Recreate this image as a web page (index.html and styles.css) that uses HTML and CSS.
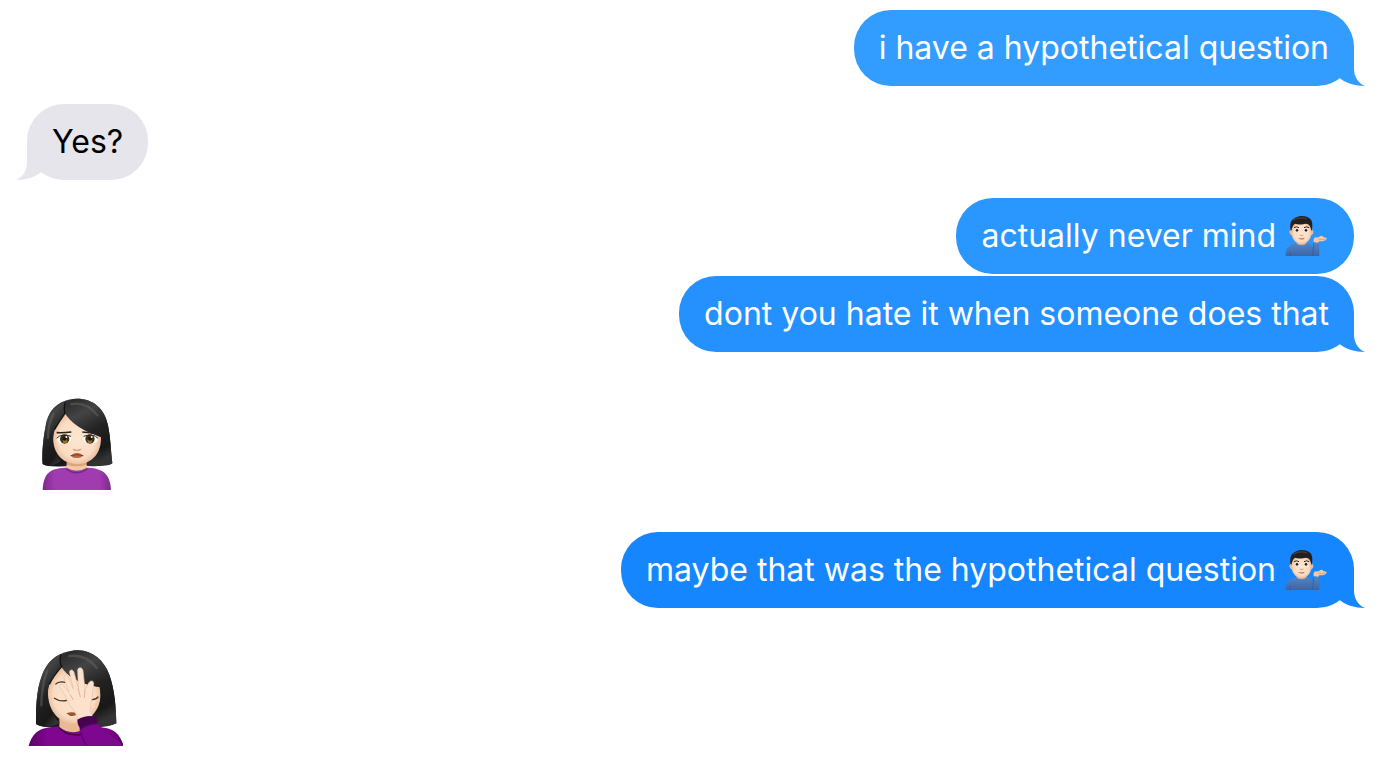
FILE: index.html
```html
<!DOCTYPE html>
<html lang="en">
<head>
    <meta charset="UTF-8">
    <meta name="viewport" content="width=device-width, initial-scale=1.0">
    <title>Messages</title>
    <link rel="stylesheet" href="styles.css">
</head>
<body>
    <!-- shared shapes -->
    <svg class="defs" width="0" height="0" aria-hidden="true">
        <defs>
            <linearGradient id="hair" x1="0.2" y1="0" x2="0.6" y2="1">
                <stop offset="0" stop-color="#2c2b2b"/>
                <stop offset="0.25" stop-color="#454444"/>
                <stop offset="0.55" stop-color="#232222"/>
                <stop offset="0.85" stop-color="#191818"/>
                <stop offset="1" stop-color="#333"/>
            </linearGradient>
            <radialGradient id="skin" cx="0.5" cy="0.5" r="0.6">
                <stop offset="0" stop-color="#fde6d2"/>
                <stop offset="0.65" stop-color="#fadcc3"/>
                <stop offset="1" stop-color="#dfa77f"/>
            </radialGradient>
            <linearGradient id="purple" x1="0" y1="0" x2="1" y2="0">
                <stop offset="0" stop-color="#7d2b8c"/>
                <stop offset="0.18" stop-color="#a03cb0"/>
                <stop offset="0.82" stop-color="#a03cb0"/>
                <stop offset="1" stop-color="#7d2b8c"/>
            </linearGradient>
            <linearGradient id="violet" x1="0" y1="0" x2="1" y2="0">
                <stop offset="0" stop-color="#5b006b"/>
                <stop offset="0.2" stop-color="#80058f"/>
                <stop offset="0.8" stop-color="#80058f"/>
                <stop offset="1" stop-color="#5b006b"/>
            </linearGradient>
            <linearGradient id="shirt" x1="0" y1="0" x2="0" y2="1">
                <stop offset="0" stop-color="#5187cb"/>
                <stop offset="1" stop-color="#3c65a6"/>
            </linearGradient>
        </defs>
        <symbol id="tail" viewBox="0 0 40 40">
            <path d="M28 0V22C28 31 32 37 39 40C29 40 20 37 15 33L4 26V0Z"/>
        </symbol>
        <symbol id="tipping-hand" viewBox="46 27 132 132">
            <path d="M48 153C48 132 54 122 72 118L86 112H108L121 117C130 120 132 130 132 153Z" fill="url(#shirt)"/>
            <path d="M81 104H110V116Q96 126 81 116Z" fill="#dfa984"/>
            <path d="M62 153V140" stroke="#35598f" stroke-width="2"/>
            <path d="M64 75C57 74 58 88 66 91H125C133 88 133 74 126 75Z" fill="#edbc95"/>
            <path d="M66 66C66 48 125 48 125 66V86C125 102 111 117 96 117C80 117 66 102 66 86Z" fill="url(#skin)"/>
            <path d="M64 79C59 60 62 44 77 38C90 30 110 32 118 39C129 45 130 60 126 79L122 66C119 59 115 56 108 56C99 59 84 59 76 56C69 60 67 70 64 79Z" fill="#252020"/>
            <path d="M70 46Q91 34 112 42" fill="none" stroke="#454040" stroke-width="4"/>
            <path d="M73 68Q80 63 88 68M103 68Q111 63 118 68" fill="none" stroke="#31231c" stroke-width="3"/>
            <ellipse cx="82" cy="76" rx="6" ry="5" fill="#fff"/>
            <ellipse cx="109" cy="76" rx="6" ry="5" fill="#fff"/>
            <circle cx="82" cy="76" r="4" fill="#291b16"/>
            <circle cx="109" cy="76" r="4" fill="#291b16"/>
            <path d="M91 90Q96 94 101 90" fill="none" stroke="#d79c79" stroke-width="3"/>
            <path d="M85 99Q96 102 106 98Q98 109 85 99Z" fill="#b95e49"/>
            <path d="M132 112Q130 99 138 97C147 99 150 92 156 92Q162 93 160 96Q171 96 171 101C168 108 158 109 148 109V115Z" fill="#f3c8a6"/>
            <path d="M145 102Q157 106 168 102" fill="none" stroke="#ce946f" stroke-width="2"/>
            <path d="M131 111Q140 115 148 112L149 153H127Z" fill="url(#shirt)"/>
            <path d="M129 153L132 115" stroke="#35598f" stroke-width="2"/>
        </symbol>
    </svg>

    <main>
        <ol class="messages">
            <li class="message sent tone-1">
                <p class="bubble">i have a hypothetical question</p>
                <svg class="tail" aria-hidden="true"><use href="#tail"/></svg>
            </li>
            <li class="message received">
                <p class="bubble">Yes?</p>
                <svg class="tail" aria-hidden="true"><use href="#tail"/></svg>
            </li>
            <li class="message sent tone-2">
                <p class="bubble">actually never mind <svg class="emoji" role="img" aria-label="man tipping hand"><use href="#tipping-hand"/></svg></p>
            </li>
            <li class="message sent tone-3 grouped">
                <p class="bubble">dont you hate it when someone does that</p>
                <svg class="tail" aria-hidden="true"><use href="#tail"/></svg>
            </li>
            <li class="message received sticker">
                <svg class="big-emoji" viewBox="-9 12 288 288" role="img" aria-label="woman pouting">
                    <path d="M38 222C35 190 40 142 47 108C54 62 84 28 138 26C190 25 224 56 234 106C242 144 242 182 247 220C232 231 192 229 141 227C92 229 54 233 38 222Z" fill="url(#hair)"/>
                    <path d="M38 300C40 250 60 235 104 233H176C220 236 240 252 243 300Z" fill="url(#purple)"/>
                    <path d="M106 233Q140 258 174 233L170 241Q140 260 110 241Z" fill="#75278a"/>
                    <path d="M110 207H170V233Q140 251 110 233Z" fill="#dca47b"/>
                    <path d="M110 224Q140 234 170 224V233Q140 249 110 233Z" fill="#f1c8a5"/>
                    <path d="M104 67C90 91 70 112 69 142C68 184 94 222 141 223C190 222 214 186 213 142C185 132 137 111 104 67Z" fill="url(#skin)"/>
                    <path d="M103 67C120 98 160 126 213 140C218 166 213 190 200 213C214 228 238 228 247 220C242 182 242 144 234 106C224 56 190 25 138 26C118 28 102 44 103 67Z" fill="url(#hair)"/>
                    <path d="M104 36C102 52 106 62 105 70C90 90 74 110 70 138C67 168 76 196 92 213C74 228 50 230 38 222C35 190 40 142 47 108C53 72 74 42 104 36Z" fill="url(#hair)"/>
                    <path d="M107 37Q100 52 105 70Q88 94 74 118" fill="none" stroke="#111" stroke-width="4"/>
                    <path d="M124 42Q170 34 202 76M70 72Q54 104 54 144" fill="none" stroke="#666" stroke-width="7" stroke-linecap="round" opacity="0.5"/>
                    <ellipse cx="102" cy="147" rx="22" ry="14" fill="#fff"/>
                    <ellipse cx="182" cy="147" rx="22" ry="14" fill="#fff"/>
                    <circle cx="104" cy="147" r="14" fill="#3b3118"/>
                    <circle cx="180" cy="147" r="14" fill="#3b3118"/>
                    <circle cx="105" cy="153" r="7" fill="#9c7130"/>
                    <circle cx="179" cy="153" r="7" fill="#9c7130"/>
                    <circle cx="104" cy="146" r="6" fill="#17140e"/>
                    <circle cx="180" cy="146" r="6" fill="#17140e"/>
                    <circle cx="109" cy="141" r="3" fill="#fff"/>
                    <circle cx="185" cy="141" r="3" fill="#fff"/>
                    <path d="M80 145Q94 129 123 139M161 139Q190 129 204 145" fill="none" stroke="#30251e" stroke-width="3"/>
                    <path d="M80 128Q103 129 124 126M157 126Q180 127 203 132" fill="none" stroke="#29231f" stroke-width="5"/>
                    <path d="M129 178Q141 185 153 178" fill="none" stroke="#dea784" stroke-width="5"/>
                    <path d="M122 197Q132 187 141 189Q151 187 160 197Q149 206 140 203Q131 206 122 197Z" fill="#bd6644"/>
                    <path d="M122 197Q141 191 160 197" fill="none" stroke="#7f3e29" stroke-width="3"/>
                </svg>
            </li>
            <li class="message sent tone-4">
                <p class="bubble">maybe that was the hypothetical question <svg class="emoji" role="img" aria-label="man tipping hand"><use href="#tipping-hand"/></svg></p>
                <svg class="tail" aria-hidden="true"><use href="#tail"/></svg>
            </li>
            <li class="message received sticker">
                <svg class="big-emoji" viewBox="21 30 288 288" role="img" aria-label="woman facepalming">
                    <path d="M48 252C48 210 48 152 66 106C84 58 124 31 174 31C220 32 252 62 268 104C284 148 288 202 289 250C261 265 219 263 168 258C121 261 78 269 48 252Z" fill="url(#hair)"/>
                    <path d="M26 318C35 285 53 265 91 262L124 258H209L253 263C288 268 303 290 311 318Z" fill="url(#violet)"/>
                    <path d="M118 236H195V265Q157 290 118 262Z" fill="#eab891"/>
                    <path d="M117 262Q140 291 187 283" fill="none" stroke="#39063f" stroke-width="4"/>
                    <path d="M123 78C100 105 84 127 84 159C83 204 112 248 157 252C206 249 241 212 242 164L239 141C195 133 145 118 123 78Z" fill="url(#skin)"/>
                    <path d="M122 74C140 112 188 134 239 141C247 180 236 218 214 240C236 258 266 262 289 250C288 202 284 148 268 104C252 62 220 32 174 31C140 32 116 48 122 74Z" fill="url(#hair)"/>
                    <path d="M121 43C118 60 126 70 124 80C102 105 86 126 83 155C82 192 98 230 120 249C96 262 66 264 48 252C48 210 48 152 66 106C78 74 98 52 121 43Z" fill="url(#hair)"/>
                    <path d="M123 43Q117 62 125 80Q101 107 88 133" fill="none" stroke="#111" stroke-width="4"/>
                    <path d="M148 48Q198 42 230 84M82 92Q64 140 64 196" fill="none" stroke="#666" stroke-width="7" stroke-linecap="round" opacity="0.5"/>
                    <path d="M106 133Q116 122 137 127" fill="none" stroke="#3d332b" stroke-width="4"/>
                    <path d="M102 174Q119 186 141 181M214 179Q228 180 235 170" fill="none" stroke="#47372d" stroke-width="4"/>
                    <path d="M139 220Q155 213 172 220Q167 230 151 228Z" fill="#9c5436"/>
                    <path d="M174 239C168 214 151 201 143 184C137 169 126 151 120 142C116 135 124 130 131 137L147 158L132 114C130 105 140 102 144 110L160 147L149 99C147 89 158 86 162 97L175 143L173 91C173 81 187 80 189 92L195 149L206 129C211 120 222 121 221 132C217 151 219 170 213 188C208 203 212 217 218 232Z" fill="#fce2cd" stroke="#e9bf9e" stroke-width="2"/>
                    <path d="M150 163L160 180M174 144L181 171M195 149L193 174" fill="none" stroke="#e5b18d" stroke-width="3"/>
                    <path d="M179 263L230 246C249 275 284 288 310 318H180C190 302 178 282 179 263Z" fill="#7e078f"/>
                    <path d="M172 239Q196 225 222 229Q235 235 232 252Q203 251 184 268Q172 258 172 239Z" fill="#46034f"/>
                    <path d="M180 269Q206 250 232 252" fill="none" stroke="#5a0869" stroke-width="4"/>
                    <path d="M201 318Q185 294 183 276" fill="none" stroke="#57066a" stroke-width="4"/>
                </svg>
            </li>
        </ol>
    </main>
</body>
</html>
```
FILE: styles.css
```css
body {
    margin: 0;
    background-color: #fff;
    font-family: Inter, "Liberation Sans", sans-serif;
    font-size: 32px;
    line-height: 44px;
}
.defs {
    position: absolute;
}
.messages {
    display: flex;
    flex-direction: column;
    gap: 18px;
    list-style: none;
    margin: 0;
    padding: 10px 39px 10px 27px;
}
.message {
    position: relative;
    max-width: 80%;
}
.sent {
    align-self: flex-end;
    color: #fff;
}
.received {
    align-self: flex-start;
    color: #000;
}
.grouped {
    margin-top: -16px;
}
.bubble {
    margin: 0;
    padding: 16px 25px;
    border-radius: 37px;
}

/* bubbles get a deeper blue further down the thread */
.tone-1 { --bubble: #329dff; }
.tone-2 { --bubble: #2a96ff; }
.tone-3 { --bubble: #2491ff; }
.tone-4 { --bubble: #1686ff; }
.received { --bubble: #e5e5eb; }
.bubble {
    background-color: var(--bubble);
}

.tail {
    position: absolute;
    right: -12px;
    bottom: 0;
    width: 40px;
    height: 40px;
    fill: var(--bubble);
}
.received .tail {
    right: auto;
    left: -12px;
    transform: scaleX(-1);
}
.emoji {
    width: 44px;
    height: 44px;
    vertical-align: top;
}
.sticker {
    padding: 24px 0;
}
.big-emoji {
    display: block;
    width: 96px;
    height: 96px;
}
```
